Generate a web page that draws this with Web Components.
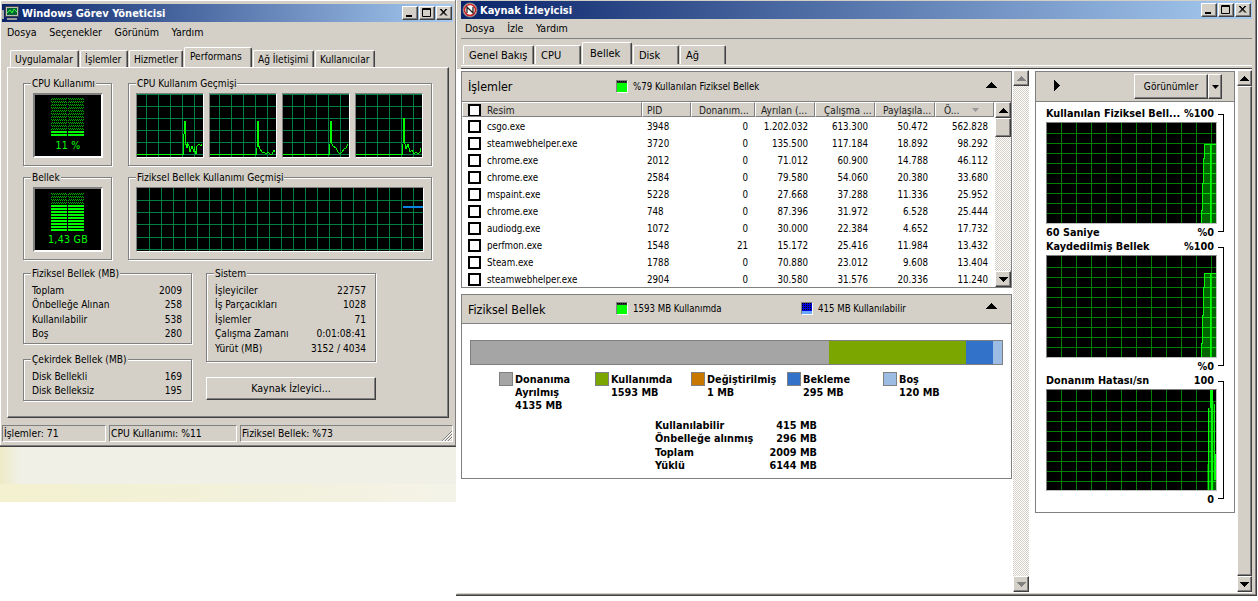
<!DOCTYPE html>
<html><head><meta charset="utf-8">
<style>
html,body{margin:0;padding:0;width:1258px;height:601px;overflow:hidden;background:#fff;font:10.1px/13px "DejaVu Sans Condensed","DejaVu Sans",sans-serif;font-stretch:condensed;color:#000}
</style></head><body>
<template id="t-window"><style>
:host{display:flex;flex-direction:column;position:absolute;box-sizing:border-box;background:#d4d0c8;border-right:1px solid #404040;border-bottom:1px solid #404040;box-shadow:inset -1px -1px 0 #808080,inset 1px 1px 0 #fff}
.title{flex:none;height:18px;display:flex;align-items:center;background:linear-gradient(90deg,#0a246a,#a6caf0);color:#fff;font-weight:700;font-size:11px}
.ic{flex:none;height:16px;display:flex;width:var(--icw,20px)}
.name{flex:1}
.btns{display:flex;margin-right:1px}
</style>
<div class="title"><span class="ic"><slot name="icon"></slot></span><span class="name"></span><span class="btns"><cap-btn kind="min"></cap-btn><cap-btn kind="max"></cap-btn><cap-btn kind="close"></cap-btn></span></div>
<slot></slot></template>

<desk-back></desk-back>
<win-window style="left:0;top:0;width:457px;height:447px;padding:4px 3px 3px 2px;--icw:20px" name="Windows Görev Yöneticisi">
  <svg slot="icon" width="18" height="16" viewBox="0 0 18 16"><rect x="3.5" y="1.5" width="13" height="10" fill="#bdbdbd" stroke="#444"/><rect x="5" y="3" width="10" height="7" fill="#063"/><path d="M5 8l3-3 2 3 2-4 3 3" fill="none" stroke="#3f3"/><rect x="0" y="5" width="2" height="9" fill="#aaa"/><rect x="5" y="13" width="10" height="2" fill="#999"/></svg>
  <win-menu items="Dosya,Seçenekler,Görünüm,Yardım" style="height:21px"></win-menu>
  <tm-perf></tm-perf>
</win-window>
<win-window style="left:456px;top:-3px;width:801px;height:599px;padding:4px 4px 2px 5px;--icw:19px;background:#d4d0c8" name="Kaynak İzleyicisi">
  <svg slot="icon" width="18" height="16" viewBox="0 0 18 16"><circle cx="9" cy="8" r="7" fill="#fff" stroke="#777"/><circle cx="9" cy="8" r="5.5" fill="none" stroke="#c22" stroke-width="1.6"/><path d="M6 11V5l6 6V5" fill="none" stroke="#222" stroke-width="1.3"/></svg>
  <win-menu items="Dosya,İzle,Yardım" style="height:20px;border-bottom:1px solid #808080;padding-left:4px"></win-menu>
  <rm-body></rm-body>
</win-window>

<script>
function def(n,c){customElements.define(n,c)}
function shadow(el,html){const s=el.attachShadow({mode:'open'});s.innerHTML=html;return s}
const esc=s=>s.replace(/&/g,'&amp;').replace(/</g,'&lt;');

def('desk-back',class extends HTMLElement{connectedCallback(){shadow(this,`<style>:host{display:block;position:absolute;left:0;top:447px;width:456px;height:55px;background:#f1f0e6;overflow:hidden}
.a{position:absolute;left:0;top:0;bottom:0;width:20px;background:linear-gradient(90deg,#ecebc6,#f1f0e6)}.b{position:absolute;left:0;right:0;top:37px;bottom:0;background:linear-gradient(90deg,#f3f1cf,#f2f1dc 60%,#f4f3e8)}</style><div class="a"></div><div class="b"></div>`)}});

def('cap-btn',class extends HTMLElement{connectedCallback(){const k=this.getAttribute('kind');const g={min:'<rect x="3" y="8" width="6" height="2" fill="#000"/>',max:'<path d="M2.5 1.5h8v8h-8z M2.5 2.5h8" fill="none" stroke="#000"/>',close:'<path d="M3 2l6 6.5M4 2l6 6.5M9 2l-6 6.5M10 2l-6 6.5" stroke="#000" fill="none"/>'}[k];
shadow(this,`<style>:host{display:block;width:16px;height:14px;box-sizing:border-box;background:#d4d0c8;border:1px solid;border-color:#fff #404040 #404040 #fff;box-shadow:inset -1px -1px 0 #808080;margin-left:1px}svg{display:block}</style><svg width="14" height="12" viewBox="0 0 14 12">${g}</svg>`)}});

def('win-window',class extends HTMLElement{connectedCallback(){const s=this.attachShadow({mode:'open'});s.appendChild(document.getElementById('t-window').content.cloneNode(true));s.querySelector('.name').textContent=this.getAttribute('name')}});

def('win-menu',class extends HTMLElement{connectedCallback(){const it=this.getAttribute('items').split(',');shadow(this,`<style>:host{display:flex;flex:none;align-items:center;gap:12.5px;padding:0 5px;box-sizing:border-box;font-size:10.6px}</style>${it.map(x=>`<span>${x}</span>`).join('')}`)}});

def('win-tabs',class extends HTMLElement{connectedCallback(){const it=this.getAttribute('items').split(',');const a=this.getAttribute('active');const w=this.getAttribute('widths').split(',');
const ih=this.getAttribute('ih'),ah=this.getAttribute('ah'),ip=this.getAttribute('ip'),ap=this.getAttribute('ap'),pl=this.getAttribute('pl'),apl=this.getAttribute('apl'),fs=this.getAttribute('fs')||'10.1';
shadow(this,`<style>:host{display:flex;align-items:flex-end;height:24px;box-sizing:border-box;font-size:${fs}px}
span{display:block;box-sizing:border-box;height:${ih}px;background:#d4d0c8;border:1px solid;border-color:#fff #404040 transparent #fff;border-bottom:0;border-radius:2px 2px 0 0;box-shadow:inset -1px 0 0 #808080;padding:${ip}px 0 0 ${pl}px;white-space:nowrap;margin-right:1px;overflow:hidden}
span.on{height:${ah}px;padding:${ap}px 0 0 ${apl}px}
</style>${it.map((x,i)=>`<span class="${x==a?'on':''}" style="width:${w[i]}px">${x}</span>`).join('')}`)}});

def('etch-group',class extends HTMLElement{connectedCallback(){shadow(this,`<style>:host{display:block;box-sizing:border-box;position:relative;border:1px solid #808080;box-shadow:1px 1px 0 #fff,inset 1px 1px 0 #fff}
.l{position:absolute;left:7px;top:-7px;background:#d4d0c8;padding:0 1px;white-space:nowrap}</style><span class="l">${esc(this.getAttribute('label'))}</span><slot></slot>`)}});

def('kv-list',class extends HTMLElement{connectedCallback(){const rows=this.getAttribute('rows').split('|').map(r=>r.split('='));
shadow(this,`<style>:host{display:grid;grid-template-columns:1fr auto;grid-auto-rows:14.5px;padding:9px 9px 0 8px;align-items:center}.v{text-align:right}</style>${rows.map(([a,b])=>`<span>${a}</span><span class="v">${b}</span>`).join('')}`)}});

def('hist-graph',class extends HTMLElement{connectedCallback(){
 const at=n=>this.getAttribute(n);
 const w=+at('w'),h=+at('h'),sx=+at('sx'),sy=+at('sy'),col=at('grid')||'#008040',ox=+(at('ox')||0),oy=+(at('oy')||0),br=at('br')||'#fff';
 let g='';for(let x=ox;x<w;x+=sx)g+=`<rect x="${x}" y="0" width="1" height="${h}"/>`;for(let y=oy;y<h;y+=sy)g+=`<rect x="0" y="${y}" width="${w}" height="1"/>`;
 const fp=at('fillp');
 shadow(this,`<style>:host{display:block;box-sizing:border-box;width:${w+2}px;height:${h+2}px;border:1px solid;border-color:#808080 ${br} ${br} #808080;background:#000}svg{display:block}</style><svg width="${w}" height="${h}" viewBox="0 0 ${w} ${h}" shape-rendering="crispEdges"><g fill="${col}">${g}</g>${fp?`<clipPath id="c"><path d="${fp}"/></clipPath><path d="${fp}" fill="#006400"/><g fill="#00e000" clip-path="url(#c)">${g}</g>`:''}${at('p')?`<path d="${at('p')}" fill="none" stroke="#00ff00" stroke-width="1"/>`:''}${at('extra')||''}</svg>`)}});

def('led-meter',class extends HTMLElement{connectedCallback(){
 const on=+this.getAttribute('on'),n=13,top=+this.getAttribute('top');
 let b='';
 for(let i=0;i<n;i++){const y=top+i*3;const lit=i>=n-on;
  for(const x of [16,33]) b+=`<rect x="${x}" y="${y}" width="16" height="2" fill="${lit?'#00ff00':'url(#hp)'}"/>`;}
 shadow(this,`<style>:host{display:block;box-sizing:border-box;border:2px solid;border-color:#808080 #fff #fff #808080;background:#000;position:relative;width:70px;height:65px}
 svg{display:block;position:absolute;left:0;top:0}.t{position:absolute;left:0;right:0;bottom:4px;text-align:center;color:#00ff00;font-size:10.5px;line-height:13px;letter-spacing:.3px}</style>
 <svg width="66" height="60" shape-rendering="crispEdges"><defs><pattern id="hp" width="2" height="2" patternUnits="userSpaceOnUse"><rect width="1" height="1" fill="#00b000"/><rect x="1" y="1" width="1" height="1" fill="#00b000"/></pattern></defs>${b}</svg><div class="t">${this.getAttribute('text')}</div>`)}});

def('tm-perf',class extends HTMLElement{connectedCallback(){
 const cpu=[
 'M0 60H46V59L47 40L48 27V50L49 50L50 54V48L52 52L53 58L55 52L57 58V53L59 60V55L60 52L62 50L64 52L65 50',
 'M0 60H46V54L47 54L48 27V50L50 55L52 58L54 58L56 60L58 58L60 60L62 60L64 56L65 58',
 'M0 60H46V54L47 50L48 27V48L50 52L53 54L55 58L57 60L59 58L61 55L63 54L65 50',
 'M0 60H46V52L47 50L48 24V45L50 55L52 50L54 58L56 56L58 60L60 58L62 60L64 58L65 54'];
 shadow(this,`<style>:host{display:block;flex:none;padding:0 0 0 5px}
 win-tabs{margin-left:3px}
 .panel{box-sizing:border-box;width:442px;height:351px;border:1px solid;border-color:#fff #404040 #404040 #fff;box-shadow:inset -1px -1px 0 #808080;padding:15px 0 0 15px;display:flex;flex-direction:column}
 .row{display:flex;gap:16px;flex:none}
 .row+.row{margin-top:11px}
 .m{width:89px;height:83px;padding:9px 0 0 9px;box-sizing:border-box}
 .h{width:304px;height:83px}
 .gs{display:flex;gap:5px;padding:9px 0 0 7px}
 .bottom{display:flex;gap:14px;margin-top:13px}
 .col{display:flex;flex-direction:column;width:170px}
 .col.a{width:169px}
 .btn{display:flex;align-items:center;justify-content:center;box-sizing:border-box;width:170px;height:23px;margin-top:15px;background:#d4d0c8;border:1px solid;border-color:#fff #404040 #404040 #fff;box-shadow:inset -1px -1px 0 #808080;font-size:10.6px}
 .status{display:flex;height:17px;gap:3px;margin:7px 0 0 -5px;width:451px;position:relative;font-size:10.3px}
 .status span{box-sizing:border-box;display:block;border:1px solid;border-color:#808080 #fff #fff #808080;padding:1px 0 0 1px;white-space:nowrap}
 .status svg{position:absolute;right:0;bottom:0}
 </style>
 <win-tabs items="Uygulamalar,İşlemler,Hizmetler,Performans,Ağ İletişimi,Kullanıcılar" active="Performans" widths="69,48,54,68,61,60" ih="17" ah="20" ip="2" ap="2" pl="4" apl="5"></win-tabs>
 <div class="panel">
  <div class="row">
   <etch-group class="m" label="CPU Kullanımı"><led-meter on="2" top="3" text="11 %"></led-meter></etch-group>
   <etch-group class="h" label="CPU Kullanım Geçmişi"><div class="gs">${cpu.map(p=>`<hist-graph w="66" h="63" sx="12" sy="12" ox="9" oy="0" p="${p}"></hist-graph>`).join('')}</div></etch-group>
  </div>
  <div class="row">
   <etch-group class="m" label="Bellek"><led-meter on="9" top="4" text="1,43 GB"></led-meter></etch-group>
   <etch-group class="h" label="Fiziksel Bellek Kullanımı Geçmişi"><div class="gs"><hist-graph w="286" h="63" sx="12" sy="12.2" ox="12" oy="12" extra='<rect x="266" y="18" width="20" height="2" fill="#0a84e0"/>'></hist-graph></div></etch-group>
  </div>
  <div class="bottom">
   <div class="col a">
    <etch-group label="Fiziksel Bellek (MB)" style="height:71px"><kv-list rows="Toplam=2009|Önbelleğe Alınan=258|Kullanılabilir=538|Boş=280"></kv-list></etch-group>
    <etch-group label="Çekirdek Bellek (MB)" style="height:42px;margin-top:15px"><kv-list rows="Disk Bellekli=169|Disk Belleksiz=195"></kv-list></etch-group>
   </div>
   <div class="col">
    <etch-group label="Sistem" style="height:89px"><kv-list rows="İşleyiciler=22757|İş Parçacıkları=1028|İşlemler=71|Çalışma Zamanı=0:01:08:41|Yürüt (MB)=3152 / 4034"></kv-list></etch-group>
    <div class="btn">Kaynak İzleyici...</div>
   </div>
  </div>
 </div>
 <div class="status"><span style="width:104px">İşlemler: 71</span><span style="width:128px">CPU Kullanımı: %11</span><span style="width:213px">Fiziksel Bellek: %73</span>
 <svg width="12" height="12" shape-rendering="crispEdges"><path d="M11 1L1 11M11 4L4 11M11 7L7 11" stroke="#808080"/><path d="M11 2L2 11M11 5L5 11M11 8L8 11" stroke="#fff"/></svg></div>`)}});

def('scroll-bar',class extends HTMLElement{connectedCallback(){
 const th=this.getAttribute('thumb');const dis=this.hasAttribute('disabled');
 const ar=(d,c)=>`<svg width="9" height="5" viewBox="0 0 9 5" shape-rendering="crispEdges"><path d="${d=='u'?'M4 0h1v1h1v1h1v1h1v1h1v1H0V4h1V3h1V2h1V1h1z':'M0 0h9v1H8v1H7v1H6v1H5v1H4V4H3V3H2V2H1V1H0z'}" fill="${c}"/></svg>`;
 shadow(this,`<style>:host{display:flex;flex-direction:column;flex:none;width:16px;box-sizing:border-box}
 .b{flex:none;height:16px;display:flex;align-items:center;justify-content:center;box-sizing:border-box;background:#d4d0c8;border:1px solid;border-color:#fff #404040 #404040 #fff;box-shadow:inset -1px -1px 0 #808080}
 .t{flex:1;position:relative;background-color:#fff;background-image:conic-gradient(#d4d0c8 25%,#fff 0 50%,#d4d0c8 0 75%,#fff 0);background-size:2px 2px}
 .th{display:block;box-sizing:border-box;background:#d4d0c8;border:1px solid;border-color:#fff #404040 #404040 #fff;box-shadow:inset -1px -1px 0 #808080;position:absolute;left:0;right:0;top:0;height:${th||0}px}
 </style><div class="b">${ar('u',dis?'#808080':'#000')}</div><div class="t">${th?'<span class="th"></span>':''}</div><div class="b">${ar('d',dis?'#808080':'#000')}</div>`)}});

def('sec-head',class extends HTMLElement{connectedCallback(){shadow(this,`<style>:host{display:flex;align-items:center;position:relative;box-sizing:border-box;background:#d4d0c8;border:1px solid #808080;padding-left:6px}
 .t{font-size:12.4px}.a{position:absolute;right:14px;top:${this.getAttribute('at')}px}</style>
 <span class="t">${this.getAttribute('label')}</span><slot></slot><svg class="a" width="11" height="6" viewBox="0 0 11 6" shape-rendering="crispEdges"><path d="M5 0h1v1h1v1h1v1h1v1h1v1h1v1H0V5h1V4h1V3h1V2h1V1h1z"/></svg>`)}});

def('key-chip',class extends HTMLElement{connectedCallback(){const dense=this.hasAttribute('dense');
 let dots='';for(let x=0;x<10;x+=2)for(let y=0;y<(dense?8:2);y+=2)dots+=`<rect x="${x}" y="${y}" width="1" height="1" fill="#000"/>`;
 shadow(this,`<style>:host{display:flex;align-items:center;position:absolute;gap:5px;line-height:13px;font-size:9.6px}.k{display:block;box-sizing:border-box;width:12px;height:13px;border:1px solid;border-color:#808080 #fff #fff #808080}svg{display:block}</style>
 <span class="k"><svg width="10" height="11" shape-rendering="crispEdges">${dense?'<rect width="10" height="8" fill="#0000e0"/><rect y="8" width="10" height="3" fill="#6aa8ff"/>':'<rect width="10" height="11" fill="#00ff00"/><rect width="10" height="2" fill="#303030"/>'}${dots}</svg></span><span>${this.getAttribute('text')}</span>`)}});

def('col-head',class extends HTMLElement{connectedCallback(){const w=this.getAttribute('w');shadow(this,`<style>:host{display:flex;align-items:center;box-sizing:border-box;flex:none;height:15px;background:#d4d0c8;border:1px solid;border-color:#fff #808080 #808080 #fff;padding:1px 0 0 ${this.getAttribute('pl')||4}px;width:${w}px;white-space:nowrap;overflow:hidden;gap:${this.getAttribute('gap')||6}px;color:#222}</style><slot></slot>`)}});
def('check-box',class extends HTMLElement{connectedCallback(){shadow(this,`<style>:host{display:block;box-sizing:border-box;width:13px;height:13px;border:2px solid #000;background:#fff;flex:none}</style>`)}});

def('proc-row',class extends HTMLElement{connectedCallback(){const a=this.getAttribute('d').split(',');
 shadow(this,`<style>:host{display:grid;grid-template-columns:19px 160px 40px 61px 60px 60px 60px 60px;height:17px;align-items:center;white-space:nowrap;box-sizing:border-box;padding-left:6px;background:#fff;font-size:9.7px}
 .r{text-align:right}</style>
 <check-box></check-box><span>${a[0]}</span><span>${a[1]}</span><span class="r">${a[2]}</span><span class="r">${a[3]}</span><span class="r">${a[4]}</span><span class="r">${a[5]}</span><span class="r">${a[6]}</span>`)}});

def('legend-item',class extends HTMLElement{connectedCallback(){shadow(this,`<style>:host{display:flex;gap:2px;width:96px;font-weight:700;font-size:10.8px;line-height:13px}.s{flex:none;box-sizing:border-box;width:14px;height:14px;border:1px solid #808080;background:${this.getAttribute('c')}}.x{padding-top:1px}</style><span class="s"></span><div class="x"><slot></slot></div>`)}});

def('perf-chart',class extends HTMLElement{connectedCallback(){
 const t=this.getAttribute('t'),mx=this.getAttribute('max'),mn=this.getAttribute('min'),foot=this.getAttribute('foot')||'';
 shadow(this,`<style>:host{display:block;box-sizing:border-box;font-weight:700;font-size:10.8px;position:relative;width:189px}
 .r{display:flex;justify-content:space-between;width:168px;height:15px;align-items:center;white-space:nowrap;line-height:13px;box-sizing:border-box}
 .h{margin-bottom:1px}.f{padding-top:2px}
 .br{position:absolute;left:172px;width:6px;top:8px;bottom:7px;border:1px solid #000;border-left:0;box-sizing:border-box}
 </style><div class="br"></div><div class="r h"><span>${t}</span><span>${mx}</span></div><slot></slot><div class="r f"><span>${foot}</span><span>${mn}</span></div>`)}});

def('rm-body',class extends HTMLElement{connectedCallback(){
 const rows=[['csgo.exe',3948,0,'1.202.032','613.300','50.472','562.828'],['steamwebhelper.exe',3720,0,'135.500','117.184','18.892','98.292'],['chrome.exe',2012,0,'71.012','60.900','14.788','46.112'],['chrome.exe',2584,0,'79.580','54.060','20.380','33.680'],['mspaint.exe',5228,0,'27.668','37.288','11.336','25.952'],['chrome.exe',748,0,'87.396','31.972','6.528','25.444'],['audiodg.exe',1072,0,'30.000','22.384','4.652','17.732'],['perfmon.exe',1548,21,'15.172','25.416','11.984','13.432'],['Steam.exe',1788,0,'70.880','23.012','9.608','13.404'],['steamwebhelper.exe',2904,0,'30.580','31.576','20.336','11.240']];
 const gr=(a)=>`<hist-graph grid="#008000" br="#c0c0c0" w="169" ${a}></hist-graph>`;
 shadow(this,`<style>:host{display:flex;flex-direction:column;flex:1;min-height:0}
 .tabs{padding:1px 0 0 2px;height:25px;box-sizing:border-box}
 .lineb{flex:none;height:4px;box-sizing:border-box;background:#d4d0c8;border-top:1px solid #fff;border-bottom:1px solid #404040;margin-top:1px}
 .main{display:flex;flex:1;min-height:0;padding:2px 0 0 4px;margin-left:-4px;background:#fff;align-items:flex-start}
 .left{width:551px;flex:none}
 .rightp{width:200px;margin-left:6px;flex:none}
 .sec{border-left:1px solid #808080;border-right:1px solid #808080;background:#fff;box-sizing:border-box}
 .hdr{display:flex;height:16px}
 .grid{display:flex;height:186px;box-sizing:border-box;border-bottom:1px solid #808080}
 .rows{flex:1;min-width:0;overflow:hidden}
 .gap{height:6px}
 .bar{display:flex;height:25px;margin:16px 8px 0 8px;border:1px solid #808080;box-sizing:border-box}
 .bar i{display:block;height:100%}
 .leg{display:flex;margin:7px 0 0 37px}
 .sum{display:grid;grid-template-columns:auto auto;width:162px;margin:7px 0 0 193px;font-weight:700;font-size:10.8px;grid-auto-rows:13.3px;justify-content:space-between;align-items:center;white-space:nowrap}
 .sum .v{text-align:right}
 .phead{height:31px;position:relative;background:#d4d0c8;border:1px solid #808080;box-sizing:border-box}
 .vb{display:flex;align-items:center;justify-content:center;box-sizing:border-box;position:absolute;top:2px;height:25px;background:#d4d0c8;border:1px solid;border-color:#fff #404040 #404040 #fff;box-shadow:inset -1px -1px 0 #808080}
 .tri{position:absolute;left:18px;top:8px}
 .charts{box-sizing:border-box;border:1px solid #808080;border-top:0;height:411px;background:#fff;padding:4px 0 0 10px}
 </style>
 <div class="tabs"><win-tabs items="Genel Bakış,CPU,Bellek,Disk,Ağ" active="Bellek" widths="71,46,50,46,46" ih="19" ah="22" ip="3" ap="4" pl="5" apl="7" fs="11"></win-tabs></div>
 <div class="lineb"></div>
 <div class="main">
  <div class="left">
   <sec-head label="İşlemler" at="10" style="height:31px"><key-chip text="%79 Kullanılan Fiziksel Bellek" style="left:154px;top:8px"></key-chip></sec-head>
   <div class="sec">
    <div class="grid">
     <div class="rows">
      <div class="hdr">
       <col-head w="180" pl="5"><check-box></check-box><span>Resim</span></col-head>
       <col-head w="49">PID</col-head><col-head w="64" pl="7">Donanım...</col-head><col-head w="60" pl="5">Ayrılan (...</col-head><col-head w="60" pl="8">Çalışma ...</col-head><col-head w="60" pl="7">Paylaşıla...</col-head><col-head w="59" pl="8" gap="13">Ö...<svg width="7" height="4"><path d="M0 0h7L3.5 4z" fill="#999"/></svg></col-head>
      </div>
      ${rows.map(r=>`<proc-row d="${r.join(',')}"></proc-row>`).join('')}
     </div>
     <scroll-bar thumb="19"></scroll-bar>
    </div>
   </div>
   <div class="gap"></div>
   <sec-head label="Fiziksel Bellek" at="8" style="height:30px"><key-chip text="1593 MB Kullanımda" style="left:154px;top:7px"></key-chip><key-chip dense text="415 MB Kullanılabilir" style="left:339px;top:7px"></key-chip></sec-head>
   <div class="sec" style="height:155px;border-bottom:1px solid #808080;overflow:hidden">
    <div class="bar"><i style="width:358px;background:#a5a5a5"></i><i style="width:137px;background:#7ba600"></i><i style="width:27px;background:#3272c8"></i><i style="flex:1;background:#9dbce4"></i></div>
    <div class="leg">
     <legend-item c="#a5a5a5">Donanıma<br>Ayrılmış<br>4135 MB</legend-item>
     <legend-item c="#7ba600">Kullanımda<br>1593 MB</legend-item>
     <legend-item c="#c87800">Değiştirilmiş<br>1 MB</legend-item>
     <legend-item c="#3272c8">Bekleme<br>295 MB</legend-item>
     <legend-item c="#9dbce4">Boş<br>120 MB</legend-item>
    </div>
    <div class="sum"><span>Kullanılabilir</span><span class="v">415 MB</span><span>Önbelleğe alınmış</span><span class="v">296 MB</span><span>Toplam</span><span class="v">2009 MB</span><span>Yüklü</span><span class="v">6144 MB</span></div>
   </div>
  </div>
  <scroll-bar disabled style="height:522px;margin:-1px 0 0 1px"></scroll-bar>
  <div class="rightp">
   <div class="phead"><svg class="tri" width="6" height="11" shape-rendering="crispEdges"><path d="M0 0h1v1h1v1h1v1h1v1h1v1h1v1H5v1H4v1H3v1H2v1H1v1H0z"/></svg>
    <div class="vb" style="left:98px;width:74px">Görünümler</div><div class="vb" style="left:172px;width:14px"><svg width="7" height="4"><path d="M0 0h7L3.5 4z"/></svg></div></div>
   <div class="charts">
    <perf-chart t="Kullanılan Fiziksel Bell..." max="%100" min="%0" foot="60 Saniye">${gr('h="100" sx="15" sy="10" ox="14" oy="10" fillp="M169 100H154V87H155V60H156V35H157V21H169Z" p="M169 21H157V35H156V60H155V87H154V100M163 21V100"')}</perf-chart>
    <perf-chart t="Kaydedilmiş Bellek" max="%100" min="%0">${gr('h="101" sx="15" sy="10" ox="14" oy="11" fillp="M169 101H154V87H155V59H156V31H157V17H169Z" p="M169 17H157V31H156V59H155V87H154V101M163 17V101"')}</perf-chart>
    <perf-chart t="Donanım Hatası/sn" max="100" min="0">${gr('h="100" sx="15" sy="10" ox="14" oy="11" fillp="M160 100V74H161V18H163V0H166V12H167V63H168V90H169V100Z" p="M161 100V18M164 100V0M165 100V0M163 18V0H166M167 90V14M168 90V64"')}</perf-chart>
   </div>
  </div>
  <scroll-bar thumb="490" style="width:15px;height:522px;margin:-1px 0 0 2px"></scroll-bar>
 </div>`)}});
</script>
</body></html>
